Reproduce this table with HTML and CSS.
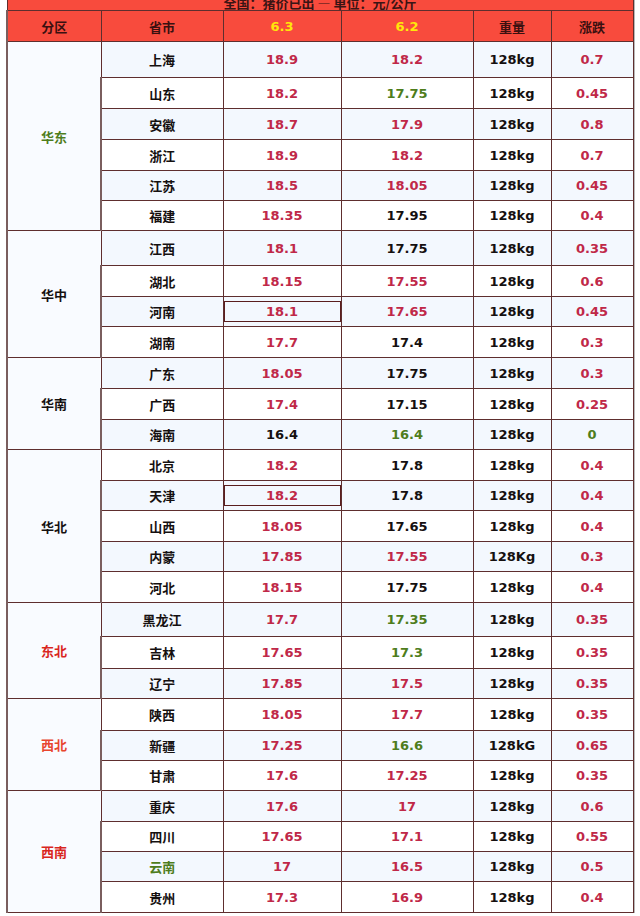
FILE: index.html
```html
<!DOCTYPE html>
<html lang="zh">
<head>
<meta charset="utf-8">
<title>猪价</title>
<link rel="stylesheet" href="styles.css">
</head>
<body>
<table class="price">
  <colgroup>
    <col class="c1"><col class="c2"><col class="c3"><col class="c4"><col class="c5"><col class="c6">
  </colgroup>
  <thead>
    <tr class="title"><td colspan="6">全国：猪价已出 — 单位：元/公斤</td></tr>
    <tr class="head">
      <th>分区</th><th>省市</th><th class="date">6.3</th><th class="date">6.2</th><th>重量</th><th>涨跌</th>
    </tr>
  </thead>
  <tbody>
    <tr class="odd h36"><td rowspan="6" class="zone green">华东</td><td>上海</td><td class="r">18.9</td><td class="r">18.2</td><td>128kg</td><td class="r">0.7</td></tr>
    <tr class="h31"><td>山东</td><td class="r">18.2</td><td class="g">17.75</td><td>128kg</td><td class="r">0.45</td></tr>
    <tr class="odd h31"><td>安徽</td><td class="r">18.7</td><td class="r">17.9</td><td>128kg</td><td class="r">0.8</td></tr>
    <tr class="h31"><td>浙江</td><td class="r">18.9</td><td class="r">18.2</td><td>128kg</td><td class="r">0.7</td></tr>
    <tr class="odd h30"><td>江苏</td><td class="r">18.5</td><td class="r">18.05</td><td>128kg</td><td class="r">0.45</td></tr>
    <tr class="h30"><td>福建</td><td class="r">18.35</td><td>17.95</td><td>128kg</td><td class="r">0.4</td></tr>

    <tr class="odd h35"><td rowspan="4" class="zone">华中</td><td>江西</td><td class="r">18.1</td><td>17.75</td><td>128kg</td><td class="r">0.35</td></tr>
    <tr class="h31"><td>湖北</td><td class="r">18.15</td><td class="r">17.55</td><td>128kg</td><td class="r">0.6</td></tr>
    <tr class="odd h30"><td>河南</td><td class="r boxed"><div class="box">18.1</div></td><td class="r">17.65</td><td>128kg</td><td class="r">0.45</td></tr>
    <tr class="h31"><td>湖南</td><td class="r">17.7</td><td>17.4</td><td>128kg</td><td class="r">0.3</td></tr>

    <tr class="odd h31"><td rowspan="3" class="zone">华南</td><td>广东</td><td class="r">18.05</td><td>17.75</td><td>128kg</td><td class="r">0.3</td></tr>
    <tr class="h31"><td>广西</td><td class="r">17.4</td><td>17.15</td><td>128kg</td><td class="r">0.25</td></tr>
    <tr class="odd h30"><td>海南</td><td>16.4</td><td class="g">16.4</td><td>128kg</td><td class="g">0</td></tr>

    <tr class="h31"><td rowspan="5" class="zone">华北</td><td>北京</td><td class="r">18.2</td><td>17.8</td><td>128kg</td><td class="r">0.4</td></tr>
    <tr class="odd h30"><td>天津</td><td class="r boxed"><div class="box">18.2</div></td><td>17.8</td><td>128kg</td><td class="r">0.4</td></tr>
    <tr class="h31"><td>山西</td><td class="r">18.05</td><td>17.65</td><td>128kg</td><td class="r">0.4</td></tr>
    <tr class="odd h30"><td>内蒙</td><td class="r">17.85</td><td class="r">17.55</td><td>128Kg</td><td class="r">0.3</td></tr>
    <tr class="h31"><td>河北</td><td class="r">18.15</td><td>17.75</td><td>128kg</td><td class="r">0.4</td></tr>

    <tr class="odd h34"><td rowspan="3" class="zone red">东北</td><td>黑龙江</td><td class="r">17.7</td><td class="g">17.35</td><td>128kg</td><td class="r">0.35</td></tr>
    <tr class="h32"><td>吉林</td><td class="r">17.65</td><td class="g">17.3</td><td>128kg</td><td class="r">0.35</td></tr>
    <tr class="odd h30"><td>辽宁</td><td class="r">17.85</td><td class="r">17.5</td><td>128kg</td><td class="r">0.35</td></tr>

    <tr class="h32"><td rowspan="3" class="zone orange">西北</td><td>陕西</td><td class="r">18.05</td><td class="r">17.7</td><td>128kg</td><td class="r">0.35</td></tr>
    <tr class="odd h30"><td>新疆</td><td class="r">17.25</td><td class="g">16.6</td><td>128kG</td><td class="r">0.65</td></tr>
    <tr class="h30"><td>甘肃</td><td class="r">17.6</td><td class="r">17.25</td><td>128kg</td><td class="r">0.35</td></tr>

    <tr class="odd h31"><td rowspan="4" class="zone red">西南</td><td>重庆</td><td class="r">17.6</td><td class="r">17</td><td>128kg</td><td class="r">0.6</td></tr>
    <tr class="h30"><td>四川</td><td class="r">17.65</td><td class="r">17.1</td><td>128kg</td><td class="r">0.55</td></tr>
    <tr class="odd h30"><td class="g">云南</td><td class="r">17</td><td class="r">16.5</td><td>128kg</td><td class="r">0.5</td></tr>
    <tr class="h31"><td>贵州</td><td class="r">17.3</td><td class="r">16.9</td><td>128kg</td><td class="r">0.4</td></tr>
  </tbody>
</table>
</body>
</html>
```

FILE: styles.css
```css
html, body {
  margin: 0;
  padding: 0;
  background: #ffffff;
}

body {
  overflow: hidden;
}

.price {
  margin: -18px 0 0 6px;
  border-collapse: collapse;
  table-layout: fixed;
  width: 626px;
  font-family: "DejaVu Sans", "Noto Sans CJK SC", sans-serif;
  font-size: 13px;
  font-weight: bold;
  color: #151010;
  box-shadow: 1px 2px 0 #b8b8b8;
}

.c1 { width: 94px; }
.c2 { width: 122px; }
.c3 { width: 118px; }
.c4 { width: 132px; }
.c5 { width: 78px; }
.c6 { width: 82px; }

.price td,
.price th {
  border: 1px solid #5e2e2e;
  text-align: center;
  vertical-align: middle;
  padding: 0;
}

.title td {
  height: 27px;
  background: #f84b3d;
  vertical-align: bottom;
  padding-bottom: 0;
  line-height: 14px;
  color: #3a1414;
  font-family: "Noto Sans CJK SC", sans-serif;
  font-size: 13px;
}

.head th {
  height: 30px;
  background: #f84b3d;
  color: #3a1010;
  font-family: "Noto Sans CJK SC", sans-serif;
  font-size: 13px;
  font-weight: bold;
}

.head th.date {
  color: #ffe60a;
  font-family: "DejaVu Sans", sans-serif;
}

tbody tr { background: #ffffff; }
tbody tr.odd { background: #f3f8fe; }

tbody td.zone {
  background: #f9fbff;
}

.price tbody td:first-child,
.price thead th:first-child {
  border-left: 2px solid #7a5e5e;
}

.h30 { height: 30px; }
.h31 { height: 31px; }
.h32 { height: 32px; }
.h34 { height: 34px; }
.h35 { height: 35px; }
.h36 { height: 36px; }

.r { color: #c02848; }
.g { color: #4e7d1c; }

.zone { font-family: "Noto Sans CJK SC", sans-serif; }
.zone.green { color: #4e7d1c; }
.zone.red { color: #d9261e; }
.zone.orange { color: #e8452e; }

.boxed {
  padding: 4px 0 5px 0;
}

.box {
  border: 1px solid #5a1e1e;
  height: 19px;
  line-height: 19px;
}
```
